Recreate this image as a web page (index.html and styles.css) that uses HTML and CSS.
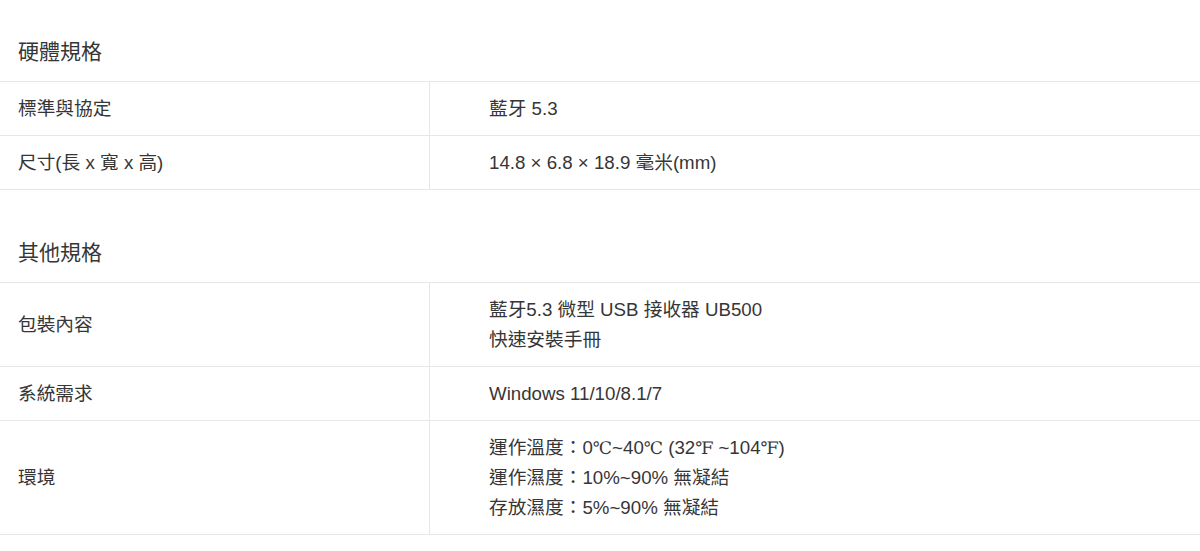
FILE: index.html
```html
<!DOCTYPE html>
<html lang="zh-Hant">
<head>
<meta charset="utf-8">
<title>規格</title>
<link rel="stylesheet" href="styles.css">
</head>
<body>
<section class="spec spec-first">
  <h2 class="spec-title">硬體規格</h2>
  <div class="spec-table">
    <div class="spec-row">
      <div class="spec-key">標準與協定</div>
      <div class="spec-val">藍牙 5.3</div>
    </div>
    <div class="spec-row">
      <div class="spec-key">尺寸(長 x 寬 x 高)</div>
      <div class="spec-val">14.8 × 6.8 × 18.9 毫米(mm)</div>
    </div>
  </div>
</section>
<section class="spec spec-next">
  <h2 class="spec-title">其他規格</h2>
  <div class="spec-table">
    <div class="spec-row">
      <div class="spec-key">包裝內容</div>
      <div class="spec-val">藍牙5.3 微型 USB 接收器 UB500<br>快速安裝手冊</div>
    </div>
    <div class="spec-row">
      <div class="spec-key">系統需求</div>
      <div class="spec-val">Windows 11/10/8.1/7</div>
    </div>
    <div class="spec-row">
      <div class="spec-key">環境</div>
      <div class="spec-val">運作溫度：0<span class="unit">℃</span>~40<span class="unit">℃</span> (32<span class="unit">℉</span> ~104<span class="unit">℉</span>)<br>運作濕度：10%~90% 無凝結<br>存放濕度：5%~90% 無凝結</div>
    </div>
  </div>
</section>
</body>
</html>
```

FILE: styles.css
```css
html, body {
  margin: 0;
  padding: 0;
  background: #ffffff;
}

body {
  font-family: "Liberation Sans", Arial, "Noto Sans CJK TC", sans-serif;
  color: #363636;
  font-size: 18.7px;
}

.spec-first {
  padding-top: 37px;
}

.spec-next {
  margin-top: 48px;
}

.spec-title {
  margin: 0;
  padding: 0 18px 14px;
  font-size: 21px;
  font-weight: normal;
  line-height: 30px;
  color: #363636;
}

.spec-table {
  border-top: 1px solid #e6e6eb;
}

.spec-row {
  display: grid;
  grid-template-columns: 430px 1fr;
  border-bottom: 1px solid #e6e6eb;
}

.spec-key {
  display: flex;
  align-items: center;
  padding: 11.5px 18px;
  line-height: 30px;
  border-right: 1px solid #e6e6eb;
}

.spec-val {
  padding: 11.5px 0 11.5px 59px;
  line-height: 30px;
}

.unit {
  font-family: "DejaVu Serif", "Liberation Serif", serif;
  font-size: 0.92em;
}
```
